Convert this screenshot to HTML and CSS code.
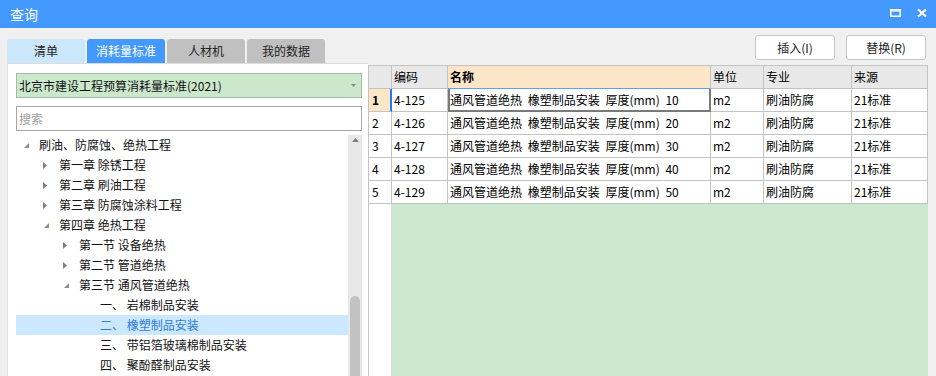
FILE: index.html
```html
<!DOCTYPE html>
<html lang="zh-CN">
<head>
<meta charset="utf-8">
<title>查询</title>
<link rel="stylesheet" href="styles.css">
</head>
<body>
<div class="window">
  <div class="titlebar">
    <span class="title">查询</span>
    <div class="win-btns">
      <svg width="11" height="8" viewBox="0 0 11 8"><path d="M0 0h11v8H0z M1.5 2.5v4h8v-4z" fill="#fff" fill-rule="evenodd"/></svg>
      <svg width="10" height="8" viewBox="0 0 10 8"><path d="M1 0.5L9 7.5M9 0.5L1 7.5" stroke="#fff" stroke-width="2.2" fill="none"/></svg>
    </div>
  </div>
  <div class="main">
    <div class="left">
      <div class="tabs">
        <div class="tab tab-light">清单</div>
        <div class="tab tab-active">消耗量标准</div>
        <div class="tab">人材机</div>
        <div class="tab">我的数据</div>
      </div>
      <div class="panel">
        <div class="select">
          <span>北京市建设工程预算消耗量标准(2021)</span>
          <svg class="caret" width="5" height="3" viewBox="0 0 5 3"><path d="M0 0H5L2.5 3Z" fill="#8a8a8a"/></svg>
        </div>
        <div class="search">搜索</div>
        <div class="tree-wrap">
          <div class="tree">
            <div class="node l0"><span class="tw"><svg class="ex" width="5" height="5" viewBox="0 0 5 5"><path d="M5 0V5H0Z"/></svg></span><span>刷油、防腐蚀、绝热工程</span></div>
            <div class="node l1"><span class="tw"><svg width="4" height="7" viewBox="0 0 4 7"><path d="M0 0L4 3.5L0 7Z"/></svg></span><span>第一章 除锈工程</span></div>
            <div class="node l1"><span class="tw"><svg width="4" height="7" viewBox="0 0 4 7"><path d="M0 0L4 3.5L0 7Z"/></svg></span><span>第二章 刷油工程</span></div>
            <div class="node l1"><span class="tw"><svg width="4" height="7" viewBox="0 0 4 7"><path d="M0 0L4 3.5L0 7Z"/></svg></span><span>第三章 防腐蚀涂料工程</span></div>
            <div class="node l1"><span class="tw"><svg class="ex" width="5" height="5" viewBox="0 0 5 5"><path d="M5 0V5H0Z"/></svg></span><span>第四章 绝热工程</span></div>
            <div class="node l2"><span class="tw"><svg width="4" height="7" viewBox="0 0 4 7"><path d="M0 0L4 3.5L0 7Z"/></svg></span><span>第一节 设备绝热</span></div>
            <div class="node l2"><span class="tw"><svg width="4" height="7" viewBox="0 0 4 7"><path d="M0 0L4 3.5L0 7Z"/></svg></span><span>第二节 管道绝热</span></div>
            <div class="node l2"><span class="tw"><svg class="ex" width="5" height="5" viewBox="0 0 5 5"><path d="M5 0V5H0Z"/></svg></span><span>第三节 通风管道绝热</span></div>
            <div class="node l3"><span class="tw"></span><span>一、 岩棉制品安装</span></div>
            <div class="node l3 selected"><span class="tw"></span><span>二、 橡塑制品安装</span></div>
            <div class="node l3"><span class="tw"></span><span>三、 带铝箔玻璃棉制品安装</span></div>
            <div class="node l3"><span class="tw"></span><span>四、 聚酚醛制品安装</span></div>
          </div>
          <div class="scrollbar">
            <svg class="sb-up" width="7" height="4" viewBox="0 0 7 4"><path d="M0 4L3.5 0L7 4Z" fill="#7d7d7d"/></svg>
            <div class="sb-thumb"></div>
          </div>
        </div>
      </div>
    </div>
    <div class="right">
      <div class="toolbar">
        <button class="btn">插入(I)</button>
        <button class="btn">替换(R)</button>
      </div>
      <div class="grid">
        <div class="row head">
          <div class="cell"></div>
          <div class="cell">编码</div>
          <div class="cell name-head">名称</div>
          <div class="cell">单位</div>
          <div class="cell">专业</div>
          <div class="cell">来源</div>
        </div>
        <div class="row">
          <div class="cell num current">1</div>
          <div class="cell">4-125</div>
          <div class="cell name active">通风管道绝热 橡塑制品安装 厚度(mm) 10</div>
          <div class="cell">m2</div>
          <div class="cell">刷油防腐</div>
          <div class="cell">21标准</div>
        </div>
        <div class="row">
          <div class="cell num">2</div>
          <div class="cell">4-126</div>
          <div class="cell name">通风管道绝热 橡塑制品安装 厚度(mm) 20</div>
          <div class="cell">m2</div>
          <div class="cell">刷油防腐</div>
          <div class="cell">21标准</div>
        </div>
        <div class="row">
          <div class="cell num">3</div>
          <div class="cell">4-127</div>
          <div class="cell name">通风管道绝热 橡塑制品安装 厚度(mm) 30</div>
          <div class="cell">m2</div>
          <div class="cell">刷油防腐</div>
          <div class="cell">21标准</div>
        </div>
        <div class="row">
          <div class="cell num">4</div>
          <div class="cell">4-128</div>
          <div class="cell name">通风管道绝热 橡塑制品安装 厚度(mm) 40</div>
          <div class="cell">m2</div>
          <div class="cell">刷油防腐</div>
          <div class="cell">21标准</div>
        </div>
        <div class="row">
          <div class="cell num">5</div>
          <div class="cell">4-129</div>
          <div class="cell name">通风管道绝热 橡塑制品安装 厚度(mm) 50</div>
          <div class="cell">m2</div>
          <div class="cell">刷油防腐</div>
          <div class="cell">21标准</div>
        </div>
        <div class="fill">
          <div class="fill-num"></div>
          <div class="fill-green"></div>
        </div>
      </div>
    </div>
  </div>
</div>
</body>
</html>
```

FILE: styles.css
```css
* { box-sizing: border-box; margin: 0; padding: 0; }

body {
  margin: 0;
  width: 936px;
  height: 376px;
  overflow: hidden;
  background: #f0f0f0;
  font-family: "Noto Sans CJK SC", "Noto Sans", sans-serif;
  font-size: 12px;
  color: #1a1a1a;
}

.window {
  display: flex;
  flex-direction: column;
  height: 376px;
}

.titlebar {
  height: 28px;
  flex: none;
  background: #4499fe;
  color: #fff;
  display: flex;
  align-items: center;
  justify-content: space-between;
  padding: 0 9px 0 10px;
}

.title {
  font-size: 14px;
  line-height: 20px;
}

.win-btns {
  display: flex;
  align-items: center;
  gap: 16px;
  align-self: flex-start;
  margin-top: 9px;
}

.win-btns svg { display: block; }

.main {
  flex: 1;
  display: flex;
  min-height: 0;
}

/* left column */
.left {
  width: 368px;
  flex: none;
  padding: 11px 0 0 7px;
  display: flex;
  flex-direction: column;
}

.tabs {
  display: flex;
  gap: 2px;
  height: 24px;
  flex: none;
}

.tab {
  width: 78px;
  height: 24px;
  border-radius: 3px 3px 0 0;
  background: #c0c0c0;
  color: #222;
  display: flex;
  align-items: center;
  justify-content: center;
  font-size: 12px;
  line-height: 16px;
}

.tab-light { background: #cce6fc; }
.tab-active { background: #4499fe; color: #fff; }

.panel {
  flex: 1;
  min-height: 0;
  background: #fff;
  border-top: 1px solid #dcdcdc;
  border-left: 1px solid #e2e2e2;
  padding: 9px 6px 0 8px;
  display: flex;
  flex-direction: column;
}

.select {
  height: 25px;
  flex: none;
  background: #cce8cc;
  border: 1px solid #9fbd9f;
  display: flex;
  align-items: center;
  justify-content: space-between;
  padding: 0 5px 0 2px;
  color: #111;
  line-height: 16px;
}

.caret { display: block; }

.search {
  height: 25px;
  flex: none;
  margin-top: 8px;
  border: 1px solid #a8a8a8;
  color: #a0a0a0;
  display: flex;
  align-items: center;
  padding-left: 2px;
  line-height: 16px;
}

.tree-wrap {
  flex: 1;
  min-height: 0;
  margin-top: 4px;
  display: flex;
  overflow: hidden;
}

.tree {
  flex: 1;
  min-width: 0;
}

.node {
  height: 20px;
  display: flex;
  align-items: center;
  white-space: nowrap;
  line-height: 20px;
  color: #111;
}

.tw {
  width: 23px;
  flex: none;
  display: flex;
  align-items: center;
  padding-left: 7px;
}

.tw svg { display: block; fill: #7f7f7f; }
.tw svg.ex { margin-left: 1px; fill: #8c8c8c; }

.l1 { padding-left: 20px; }
.l2 { padding-left: 40px; }
.l3 { padding-left: 60px; }
.l3 .tw { width: 24px; }

.node.selected {
  background: #cce8ff;
  color: #2f7bd8;
}

.scrollbar {
  width: 14px;
  flex: none;
  background: #e8e8e8;
  display: flex;
  flex-direction: column;
  align-items: center;
}

.sb-up {
  display: block;
  margin-top: 3px;
  flex: none;
}

.sb-thumb {
  width: 10px;
  height: 120px;
  flex: none;
  margin-top: 154px;
  background: #c2c2c2;
  border-radius: 5px 5px 0 0;
}

/* right column */
.right {
  flex: 1;
  min-width: 0;
  display: flex;
  flex-direction: column;
}

.toolbar {
  height: 25px;
  flex: none;
  margin-top: 7px;
  display: flex;
  justify-content: flex-end;
  gap: 11px;
  padding-right: 10px;
}

.btn {
  width: 80px;
  height: 25px;
  background: #fff;
  border: 1px solid #c6c6c6;
  border-radius: 3px;
  font-family: "Noto Sans CJK SC", "Noto Sans", sans-serif;
  font-size: 12px;
  color: #222;
  line-height: 16px;
}

.grid {
  width: 560px;
  flex: 1;
  min-height: 0;
  margin-top: 5px;
  border-left: 1px solid #c3c3c3;
  border-top: 1px solid #c3c3c3;
  display: flex;
  flex-direction: column;
}

.row {
  display: grid;
  grid-template-columns: 23px 56px 263px 53px 88px 76px;
  height: 23px;
  flex: none;
  background: #fff;
}

.cell {
  border-right: 1px solid #c3c3c3;
  border-bottom: 1px solid #c3c3c3;
  padding-left: 2px;
  line-height: 22px;
  white-space: nowrap;
  overflow: hidden;
  color: #000;
  font-size: 12px;
}

.cell.name { word-spacing: 3px; }

.head .cell { background: #e8e8e8; }

.head .cell.name-head {
  background: #fde6c8;
  font-weight: bold;
  border-bottom-color: #5aa2f7;
}

.cell.num { padding-left: 3px; }

.cell.current {
  background: #fde6c8;
  font-weight: bold;
  border-right: 2px solid #1e7cf4;
}

.cell.active {
  border-right: 2px solid #7a7a7a;
  border-bottom: 2px solid #7a7a7a;
  box-shadow: inset 2px 0 #7a7a7a;
  line-height: 21px;
}

.fill {
  flex: 1;
  display: grid;
  grid-template-columns: 23px 536px;
}

.fill-num {
  background: #fff;
  border-right: 1px solid #d8d8d8;
}

.fill-green { background: #cce8cf; }
```
